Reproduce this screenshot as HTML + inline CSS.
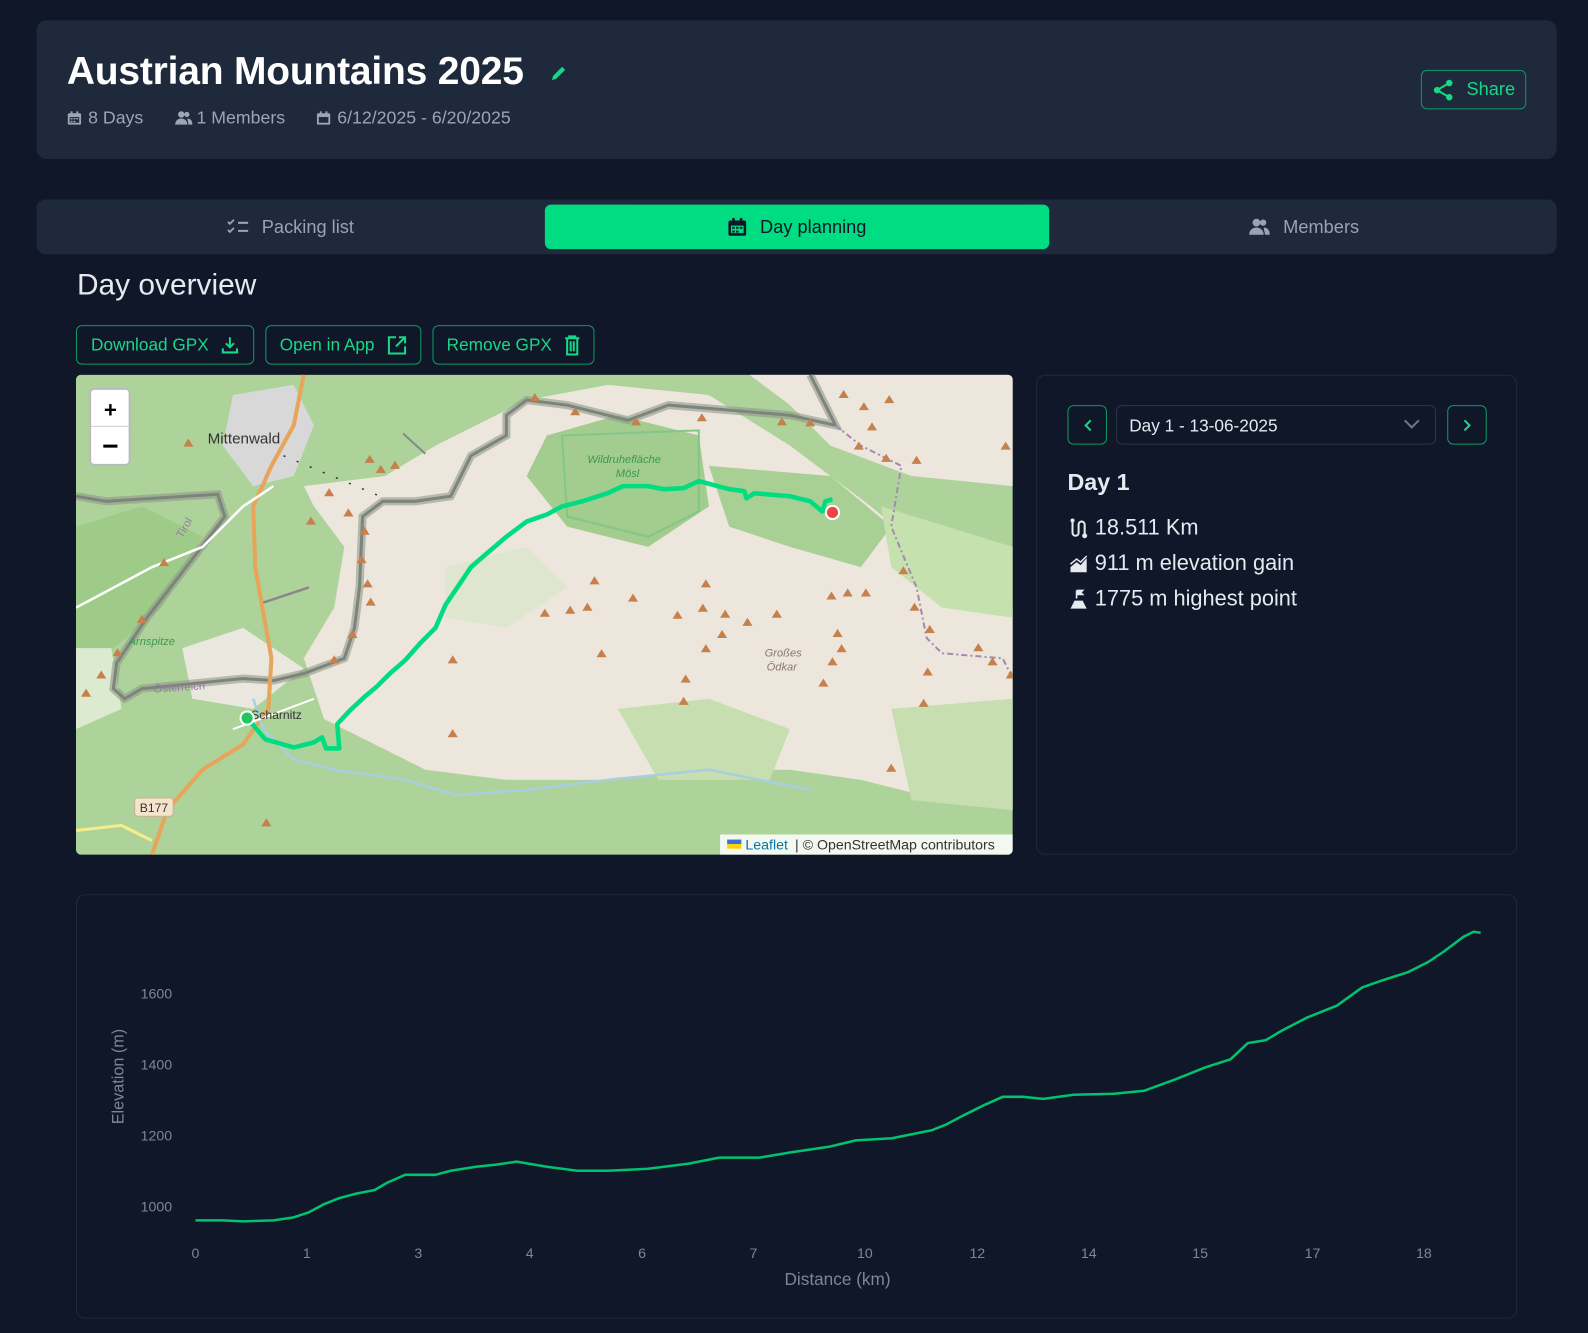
<!DOCTYPE html>
<html><head><meta charset="utf-8">
<style>
*{box-sizing:border-box;margin:0;padding:0}
html,body{width:1588px;height:1333px;overflow:hidden;background:#0f1729;font-family:"Liberation Sans",sans-serif}
#w{position:absolute;left:0;top:0;width:1568px;height:1316px;transform:scale(1.01276);transform-origin:0 0}
.abs{position:absolute}
.card{left:36px;top:20px;width:1501px;height:137px;background:#1e293b;border-radius:10px}
h1{position:absolute;left:66px;top:49px;font-size:38.5px;font-weight:bold;color:#fff;letter-spacing:-0.2px}
.meta{position:absolute;top:106px;font-size:17.5px;color:#9aa5b5;display:flex;align-items:center;gap:6px}
.btn{position:absolute;border:1px solid #0e9a62;border-radius:6px;color:#16d986;font-size:17px;display:flex;align-items:center;justify-content:center;gap:12px}
.tabs{left:36px;top:197px;width:1501px;height:54px;background:#1e293b;border-radius:9px}
.tab{position:absolute;top:202px;height:44px;display:flex;align-items:center;justify-content:center;gap:12px;font-size:18px;color:#97a3b6}
.panel{position:absolute;border:1px solid #1f2a3b;border-radius:9px}
.stat{position:absolute;left:1055px;font-size:21.5px;color:#e5e9f0;display:flex;align-items:center;gap:6px}
.nb{position:absolute;top:400px;width:39px;height:39px;border:1px solid #0e9a62;border-radius:6px;display:flex;align-items:center;justify-content:center}
</style></head><body><div id="w">
<div class="abs card"></div>
<h1>Austrian Mountains 2025</h1>
<svg class="abs" style="left:542px;top:62px" width="20" height="20" viewBox="0 0 20 20"><path d="M3 17l1-4 9-9 3 3-9 9z" fill="#16d986"/></svg>
<div class="meta" style="left:66px"><svg width="15" height="15" viewBox="0 0 16 16"><rect x="1" y="3" width="14" height="12" rx="1.5" fill="#9aa5b5"/><rect x="4" y="1" width="2" height="3" fill="#9aa5b5"/><rect x="10" y="1" width="2" height="3" fill="#9aa5b5"/><rect x="3" y="7" width="10" height="6" fill="#1e293b"/><g fill="#9aa5b5"><rect x="4" y="8" width="2" height="1.5"/><rect x="7" y="8" width="2" height="1.5"/><rect x="10" y="8" width="2" height="1.5"/><rect x="4" y="11" width="2" height="1.5"/><rect x="7" y="11" width="2" height="1.5"/></g></svg>8 Days</div>
<div class="meta" style="left:172px;gap:4px"><svg width="18" height="15" viewBox="0 0 18 15"><circle cx="7" cy="4" r="3.2" fill="#9aa5b5"/><circle cx="12.5" cy="4" r="2.6" fill="#9aa5b5"/><path d="M1 14c0-4 3-6 6-6s6 2 6 6z" fill="#9aa5b5"/><path d="M13 8c3 0 5 2 5 6h-4c0-2-1-4-1-6z" fill="#9aa5b5"/></svg>1 Members</div>
<div class="meta" style="left:312px"><svg width="15" height="15" viewBox="0 0 16 16"><rect x="1" y="3" width="14" height="12" rx="1.5" fill="#9aa5b5"/><rect x="4" y="1" width="2" height="3" fill="#9aa5b5"/><rect x="10" y="1" width="2" height="3" fill="#9aa5b5"/><rect x="3" y="7" width="10" height="6" fill="#1e293b"/></svg>6/12/2025 - 6/20/2025</div>
<div class="btn" style="left:1403px;top:69px;width:104px;height:39px;font-size:18px"><svg width="22" height="22" viewBox="0 0 22 22"><circle cx="17" cy="4" r="3.2" fill="#16d986"/><circle cx="5" cy="11" r="3.2" fill="#16d986"/><circle cx="17" cy="18" r="3.2" fill="#16d986"/><path d="M17 4L5 11l12 7" stroke="#16d986" stroke-width="2" fill="none"/></svg>Share</div>

<div class="abs tabs"></div>
<div class="abs" style="left:538px;top:202px;width:498px;height:44px;background:#00dc82;border-radius:6px"></div>
<div class="tab" style="left:36px;width:502px"><svg width="22" height="18" viewBox="0 0 22 18"><path d="M1 4l2 2 4-4M1 12l2 2 4-4" stroke="#97a3b6" stroke-width="1.8" fill="none"/><path d="M11 5h10M11 13h10" stroke="#97a3b6" stroke-width="2"/></svg>Packing list</div>
<div class="tab" style="left:538px;width:498px;color:#0f1729"><svg width="20" height="20" viewBox="0 0 16 16"><rect x="1" y="3" width="14" height="12" rx="1.5" fill="#0f1729"/><rect x="4" y="1" width="2" height="3" fill="#0f1729"/><rect x="10" y="1" width="2" height="3" fill="#0f1729"/><rect x="3" y="7" width="10" height="6" fill="#00dc82"/><g fill="#0f1729"><rect x="4" y="8" width="2" height="1.5"/><rect x="7" y="8" width="2" height="1.5"/><rect x="10" y="8" width="2" height="1.5"/><rect x="4" y="11" width="2" height="1.5"/><rect x="7" y="11" width="2" height="1.5"/></g></svg>Day planning</div>
<div class="tab" style="left:1036px;width:501px"><svg width="24" height="18" viewBox="0 0 18 15"><circle cx="7" cy="4" r="3.2" fill="#97a3b6"/><circle cx="12.5" cy="4" r="2.6" fill="#97a3b6"/><path d="M1 14c0-4 3-6 6-6s6 2 6 6z" fill="#97a3b6"/><path d="M13 8c3 0 5 2 5 6h-4c0-2-1-4-1-6z" fill="#97a3b6"/></svg>Members</div>

<div class="abs" style="left:76px;top:265px;font-size:29.5px;color:#e6eaf0">Day overview</div>
<div class="btn" style="left:75px;top:321px;width:176px;height:39px"><span>Download GPX</span><svg width="18" height="18" viewBox="0 0 18 18"><path d="M9 1v10M5 7l4 4 4-4M2 12v4h14v-4" stroke="#16d986" stroke-width="2" fill="none"/></svg></div>
<div class="btn" style="left:262px;top:321px;width:154px;height:39px"><span>Open in App</span><svg width="20" height="20" viewBox="0 0 20 20"><path d="M9 2H2v16h16v-7M12 2h6v6M18 2L9 11" stroke="#16d986" stroke-width="2" fill="none"/></svg></div>
<div class="btn" style="left:427px;top:321px;width:160px;height:39px"><span>Remove GPX</span><svg width="16" height="20" viewBox="0 0 16 20"><path d="M1 3h14M5 3V1h6v2M3 3v16h10V3M6.5 6v10M9.5 6v10" stroke="#16d986" stroke-width="2" fill="none"/></svg></div>

<svg class="abs" style="left:75px;top:370px;border-radius:5px" width="925" height="474" viewBox="75 370 925 474">
<rect x="75" y="370" width="925" height="474" fill="#aed39a"/>
<path d="M300,480 380,470 430,440 470,420 520,395 600,380 700,390 780,440 860,500 930,560 1000,600 1000,800 930,790 850,770 780,760 700,760 600,770 500,770 420,760 360,730 320,710 300,650 330,600 340,540 310,500Z" fill="#ede6dd"/>
<path d="M740,370 1000,370 1000,480 900,470 820,440 780,400Z" fill="#ede6dd"/>
<path d="M540,430 610,410 690,430 700,500 640,540 560,520 520,470Z" fill="#a3cc8f"/>
<path d="M700,460 820,470 880,520 850,560 780,540 720,520Z" fill="#a8cf94"/>
<path d="M870,500 1000,540 1000,610 930,600 880,560Z" fill="#c5e2ae"/>
<path d="M440,560 520,540 560,580 500,620 440,610Z" fill="#dfe6cf"/>
<path d="M610,700 700,690 780,720 760,770 650,770Z" fill="#c6deb0"/>
<path d="M880,700 1000,690 1000,800 900,790Z" fill="#c6deb0"/>
<path d="M75,520 140,500 200,530 160,600 100,650 75,640Z" fill="#9fcb89"/>
<path d="M180,640 240,620 300,660 250,700 190,690Z" fill="#eae7df"/>
<path d="M75,640 110,640 120,700 75,720Z" fill="#dcead0"/>
<path d="M230,390 290,380 310,420 290,470 250,480 220,440Z" fill="#d8d8d8"/>
<path d="M555,430 690,425 690,505 640,530 560,510Z" fill="none" stroke="#82c68a" stroke-width="2"/>
<path d="M75,490 105,495 215,488 222,510 180,565 145,610 115,655 112,680 123,690 140,680 240,670 270,672 300,665 340,650 350,620 355,580 358,510 378,495 410,495 445,490 465,450 500,430 500,410 520,395 560,400 620,415 660,400 720,405 780,410 825,420 800,370" fill="none" stroke="#8f9a8c" stroke-width="8" opacity=".6"/>
<path d="M75,490 105,495 215,488 222,510 180,565 145,610 115,655 112,680 123,690 140,680 240,670 270,672 300,665 340,650 350,620 355,580 358,510 378,495 410,495 445,490 465,450 500,430 500,410 520,395 560,400 620,415 660,400 720,405 780,410 825,420 800,370" fill="none" stroke="#7d857b" stroke-width="3"/>
<path d="M825,420 850,440 890,460 880,520 905,580 915,630 930,645 990,650 1000,670" fill="none" stroke="#a58ab0" stroke-width="2" stroke-dasharray="6,3,2,3"/>
<path d="M150,844 165,800 200,760 240,735 265,700 268,650 252,560 250,500 268,460 290,420 300,370" fill="none" stroke="#e7a45a" stroke-width="4"/>
<path d="M75,600 150,560 200,540 240,500 270,480" fill="none" stroke="#fff" stroke-width="2.5"/>
<path d="M75,820 120,815 150,830" fill="none" stroke="#f5ee8a" stroke-width="3"/>
<path d="M250,690 260,720 290,750 330,760 400,770 450,785 520,780 600,770 700,760 800,780" fill="none" stroke="#a7cfe0" stroke-width="2.5"/>
<path d="M230,720 310,690" stroke="#fff" stroke-width="2"/>
<path d="M280,450 380,492" stroke="#333" stroke-width="1.5" stroke-dasharray="2,12"/>
<path d="M260,595 305,580" stroke="#888" stroke-width="2.5"/>
<path d="M398,428 420,448" stroke="#888" stroke-width="2"/>
<path fill="#c6804c" d="M528,388l5,8h-10zM568,402l5,8h-10zM628,412l5,8h-10zM693,408l5,8h-10zM772,412l5,8h-10zM800,413l5,8h-10zM833,385l5,8h-10zM853,397l5,8h-10zM861,417l5,8h-10zM365,449l5,8h-10zM376,459l5,8h-10zM390,455l5,8h-10zM325,482l5,8h-10zM344,502l5,8h-10zM307,510l5,8h-10zM360,520l5,8h-10zM357,548l5,8h-10zM363,572l5,8h-10zM366,590l5,8h-10zM348,622l5,8h-10zM330,647l5,8h-10zM186,433l5,8h-10zM162,551l5,8h-10zM140,607l5,8h-10zM116,640l5,8h-10zM100,662l5,8h-10zM85,680l5,8h-10zM447,647l5,8h-10zM447,720l5,8h-10zM263,808l5,8h-10zM587,569l5,8h-10zM625,586l5,8h-10zM538,601l5,8h-10zM563,598l5,8h-10zM580,595l5,8h-10zM669,603l5,8h-10zM694,596l5,8h-10zM713,622l5,8h-10zM716,602l5,8h-10zM767,602l5,8h-10zM738,610l5,8h-10zM677,666l5,8h-10zM675,688l5,8h-10zM827,621l5,8h-10zM831,636l5,8h-10zM822,649l5,8h-10zM821,584l5,8h-10zM837,581l5,8h-10zM855,581l5,8h-10zM813,670l5,8h-10zM880,754l5,8h-10zM875,448l5,8h-10zM905,450l5,8h-10zM892,559l5,8h-10zM903,595l5,8h-10zM918,617l5,8h-10zM966,635l5,8h-10zM980,649l5,8h-10zM916,659l5,8h-10zM912,690l5,8h-10zM998,662l5,8h-10zM848,436l5,8h-10zM697,572l5,8h-10zM594,641l5,8h-10zM697,636l5,8h-10zM878,390l5,8h-10zM993,436l5,8h-10z"/>
<text x="205" y="438" font-size="15" fill="#333" font-family="Liberation Sans">Mittenwald</text>
<text x="127" y="637" font-size="11" fill="#3a9a50" font-style="italic" font-family="Liberation Sans">Arnspitze</text>
<text x="152" y="684" font-size="11" fill="#9a7aa5" font-family="Liberation Sans" transform="rotate(-4 152 684)">Österreich</text>
<text x="180" y="532" font-size="11" fill="#9a7aa5" font-family="Liberation Sans" transform="rotate(-60 180 532)">Tirol</text>
<text x="580" y="457" font-size="11" fill="#3a9a50" font-style="italic" font-family="Liberation Sans">Wildruhefläche</text>
<text x="608" y="471" font-size="11" fill="#3a9a50" font-style="italic" font-family="Liberation Sans">Mösl</text>
<text x="755" y="648" font-size="11" fill="#8c7a6a" font-style="italic" font-family="Liberation Sans">Großes</text>
<text x="757" y="662" font-size="11" fill="#8c7a6a" font-style="italic" font-family="Liberation Sans">Ödkar</text>
<text x="248" y="710" font-size="12" fill="#333" font-family="Liberation Sans">Scharnitz</text>
<rect x="133" y="788" width="38" height="18" rx="3" fill="#f4e4cc" stroke="#c9b08f"/>
<text x="138" y="802" font-size="12" fill="#333" font-family="Liberation Sans">B177</text>
<polyline points="244,709 262,730 290,738 310,733 318,728 322,739 335,739 333,715 345,702 360,688 372,678 385,665 400,652 415,635 430,620 440,597 455,575 465,560 480,547 500,530 520,515 540,508 555,500 575,495 600,487 615,480 640,480 655,483 675,482 690,475 720,483 735,485 737,492 745,487 780,490 800,495 812,505 815,495 822,493" fill="none" stroke="#00dc82" stroke-width="4.5" stroke-linejoin="round"/>
<circle cx="244" cy="709" r="6.5" fill="#22c55e" stroke="#fff" stroke-width="2"/>
<circle cx="822" cy="506" r="6.5" fill="#ef4444" stroke="#fff" stroke-width="2"/>
<rect x="89" y="384" width="39" height="75" rx="4" fill="#fff" stroke="#bbb" stroke-width="2"/>
<line x1="90" y1="421" x2="127" y2="421" stroke="#ccc"/>
<text x="109" y="412" font-size="22" font-weight="bold" fill="#000" text-anchor="middle" font-family="Liberation Sans">+</text>
<rect x="102" y="439" width="14" height="3" fill="#000"/>
<rect x="711" y="824" width="289" height="20" fill="rgba(255,255,255,.85)"/>
<rect x="718" y="829" width="14" height="4.5" fill="#3d6fd6"/><rect x="718" y="833.5" width="14" height="4.5" fill="#ffd500"/>
<text x="736" y="839" font-size="14" fill="#0078a8" font-family="Liberation Sans">Leaflet</text>
<text x="785" y="839" font-size="14" fill="#333" font-family="Liberation Sans">| © OpenStreetMap contributors</text>
</svg>

<div class="panel" style="left:1023px;top:370px;width:475px;height:474px"></div>
<div class="nb" style="left:1054px"><svg width="10" height="14" viewBox="0 0 10 14"><path d="M8 2L3 7l5 5" stroke="#16d986" stroke-width="2" fill="none"/></svg></div>
<div class="abs" style="left:1102px;top:400px;width:316px;height:39px;border:1px solid #2b3647;border-radius:6px;color:#e5e9f0;font-size:17px;padding:10px 12px">Day 1 - 13-06-2025</div>
<svg class="abs" style="left:1385px;top:413px" width="18" height="12" viewBox="0 0 18 12"><path d="M2 2l7 7 7-7" stroke="#6b7689" stroke-width="2" fill="none"/></svg>
<div class="nb" style="left:1429px"><svg width="10" height="14" viewBox="0 0 10 14"><path d="M2 2l5 5-5 5" stroke="#16d986" stroke-width="2" fill="none"/></svg></div>
<div class="abs" style="left:1054px;top:463px;font-size:23px;font-weight:bold;color:#e5e9f0">Day 1</div>
<div class="stat" style="top:509px"><svg width="20" height="22" viewBox="0 0 20 22"><path d="M4 3v12a3 3 0 006 0V7a3 3 0 016 0v10" stroke="#e5e9f0" stroke-width="2" fill="none"/><circle cx="4" cy="3" r="2" fill="#e5e9f0"/><circle cx="16" cy="18" r="2.5" fill="#e5e9f0"/></svg>18.511 Km</div>
<div class="stat" style="top:544px"><svg width="20" height="20" viewBox="0 0 20 20"><path d="M2 18V13l6-5 4 3 6-7v14z" fill="#e5e9f0"/><path d="M2 10l6-5 4 3 6-6" stroke="#e5e9f0" stroke-width="1.5" fill="none"/></svg>911 m elevation gain</div>
<div class="stat" style="top:579px"><svg width="20" height="22" viewBox="0 0 20 22"><path d="M8 2v8M8 2h6l-2 2 2 2H8" stroke="#e5e9f0" stroke-width="1.6" fill="#e5e9f0"/><path d="M2 20l4-8h8l4 8z" fill="#e5e9f0"/></svg>1775 m highest point</div>

<div class="panel" style="left:75px;top:883px;width:1423px;height:419px"></div>
<svg class="abs" style="left:0;top:0" width="1568" height="1316" viewBox="0 0 1568 1316" font-family="Liberation Sans">
<g font-size="14" fill="#7d8697" text-anchor="end">
<text x="170" y="986">1600</text><text x="170" y="1056">1400</text><text x="170" y="1126">1200</text><text x="170" y="1196">1000</text></g>
<text x="122" y="1063" font-size="16" fill="#7d8697" text-anchor="middle" transform="rotate(-90 122 1063)">Elevation (m)</text>
<g font-size="14" fill="#7d8697" text-anchor="middle">
<text x="193" y="1242">0</text><text x="303" y="1242">1</text><text x="413" y="1242">3</text><text x="523" y="1242">4</text><text x="634" y="1242">6</text><text x="744" y="1242">7</text><text x="854" y="1242">10</text><text x="965" y="1242">12</text><text x="1075" y="1242">14</text><text x="1185" y="1242">15</text><text x="1296" y="1242">17</text><text x="1406" y="1242">18</text></g>
<text x="827" y="1269" font-size="17" fill="#7d8697" text-anchor="middle">Distance (km)</text>
<polyline points="193,1205 220,1205 240,1206 270,1205 290,1202 305,1197 320,1189 335,1183 350,1179 370,1175 382,1168 400,1160 430,1160 445,1156 470,1152 490,1150 510,1147 540,1152 570,1156 600,1156 640,1154 680,1149 710,1143 750,1143 780,1138 820,1132 845,1126 880,1124 920,1116 935,1110 950,1102 970,1092 990,1083 1010,1083 1030,1085 1060,1081 1100,1080 1130,1077 1160,1066 1190,1054 1215,1046 1232,1030 1250,1027 1265,1018 1290,1005 1320,993 1345,975 1365,968 1390,960 1410,950 1425,940 1445,925 1455,920 1462,921" fill="none" stroke="#00c26f" stroke-width="2.5" stroke-linejoin="round"/>
</svg>
</div></body></html>
